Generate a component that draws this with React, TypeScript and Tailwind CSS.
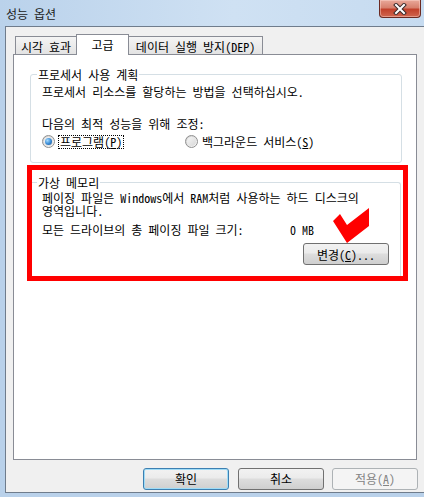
import React from "react";

const btnFace =
  "bg-[linear-gradient(#f2f2f2,#ebebeb_45%,#dddddd_50%,#cfcfcf)]";

function CloseButton() {
  return (
    <div className="ml-auto mr-[3px] w-[42px] h-[18px] rounded-b-[4px] border border-t-0 border-[#6b2a22] bg-[linear-gradient(#e9a99a,#d7806d_45%,#c2412b_55%,#d0664f)] shadow-[inset_0_0_0_1px_rgba(255,220,210,0.45)] flex items-center justify-center">
      <svg width="14" height="12" viewBox="0 0 14 12">
        <path d="M3 2 L11 10 M11 2 L3 10" stroke="#3b2a2a" strokeWidth="4" strokeLinecap="square" />
        <path d="M3 2 L11 10 M11 2 L3 10" stroke="#ffffff" strokeWidth="2" strokeLinecap="square" />
      </svg>
    </div>
  );
}

function Radio({ checked }: { checked?: boolean }) {
  return (
    <span className="flex w-[13px] h-[13px] shrink-0 items-center justify-center rounded-full border border-[#8f8f8f] bg-linear-to-br from-[#cfcfcf] to-[#fbfbfb]">
      <span className="flex w-[9px] h-[9px] items-center justify-center rounded-full bg-linear-to-br from-[#f6f6f6] to-[#d8d8d8]">
        {checked && (
          <span className="w-[7px] h-[7px] rounded-full bg-radial-[at_35%_35%] from-[#a8dcff] via-[#3e8fd8] to-[#174f8f]" />
        )}
      </span>
    </span>
  );
}

function Tab({ label, selected, width }: { label: string; selected?: boolean; width: string }) {
  if (selected) {
    return (
      <div className={`${width} h-[21px] -ml-px -mb-px relative z-10 border border-b-0 border-[#898c95] bg-white flex justify-center pt-[2px] leading-[15px]`}>
        {label}
      </div>
    );
  }
  return (
    <div className={`${width} h-[18px] -ml-px first:ml-0 border border-b-0 border-[#898c95] bg-linear-to-b from-[#f4f4f4] to-[#e3e3e3] flex justify-center pt-[2px] leading-[15px]`}>
      {label}
    </div>
  );
}

export default function App() {
  return (
    <div className="w-[424px] h-[497px] flex flex-col overflow-hidden bg-[#b9d1ea] text-[12px] text-black font-['Noto_Sans_Mono_CJK_KR','Noto_Sans_CJK_KR',monospace]">
      {/* title bar */}
      <div className="h-[26px] shrink-0 flex items-start bg-[linear-gradient(to_right,#bad2eb,#cfe1f3_55%,#c6dbf0)]">
        <span className="pl-[6px] pt-[6px] leading-[15px] text-[#1b1b1b]">성능 옵션</span>
        <CloseButton />
      </div>

      {/* dialog body */}
      <div className="ml-[5px] h-[467px] shrink-0 flex flex-col border-t border-l border-b border-[#6f7c8c] bg-[#f0f0f0] pt-[7px] pl-[7px]">
        <div className="h-[20px] flex items-end pl-[2px]">
          <Tab label="시각 효과" width="w-[62px]" />
          <Tab label="고급" width="w-[53px]" selected />
          <Tab label="데이터 실행 방지(DEP)" width="w-[135px]" />
        </div>

        <div className="w-[404px] h-[406px] border border-[#898c95] bg-white flex flex-col">
          {/* processor scheduling */}
          <fieldset className="mt-[12px] ml-[16px] w-[372px] border border-[#d5dfe5] rounded-[3px] pb-[13px]">
            <legend className="ml-[6px] px-[1px] leading-[15px]">프로세서 사용 계획</legend>
            <div className="pl-[11px] flex flex-col">
              <p className="mt-[2px] leading-[15px]">프로세서 리소스를 할당하는 방법을 선택하십시오.</p>
              <p className="mt-[17px] leading-[15px]">다음의 최적 성능을 위해 조정:</p>
              <div className="mt-[3px] h-[15px] flex items-center">
                <div className="w-[143px] flex items-center gap-[3px]">
                  <Radio checked />
                  <span className="border border-dotted border-black px-[1px] leading-[12px]">
                    프로그램(<span className="underline underline-offset-[1px]">P</span>)
                  </span>
                </div>
                <div className="flex items-center gap-[3px]">
                  <Radio />
                  <span className="px-[1px] leading-[12px]">
                    백그라운드 서비스(<span className="underline underline-offset-[1px]">S</span>)
                  </span>
                </div>
              </div>
            </div>
          </fieldset>

          {/* virtual memory, highlighted */}
          <div className="mt-[2px] ml-[13px] w-[381px] h-[116px] border-[5px] border-[#ff0000] flex flex-col">
            <fieldset className="mt-[5px] mr-[2px] border-t border-r border-[#d5dfe5] rounded-tr-[3px] flex-1">
              <legend className="ml-[5px] px-[1px] leading-[15px]">가상 메모리</legend>
              <div className="pl-[10px] flex flex-col">
                <p className="mt-[1px] leading-[13px] whitespace-nowrap">
                  페이징 파일은 Windows에서 RAM처럼 사용하는 하드 디스크의
                  <br />
                  영역입니다.
                </p>
                <div className="mt-[6px] flex leading-[13px]">
                  <span className="w-[248px]">모든 드라이브의 총 페이징 파일 크기:</span>
                  <span>0 MB</span>
                </div>
                <button className={`mt-[7px] mr-[11px] self-end w-[86px] h-[22px] rounded-[3px] border border-[#707070] ${btnFace} leading-[15px]`}>
                  변경(<span className="underline underline-offset-[1px]">C</span>)...
                </button>
              </div>
            </fieldset>
          </div>
        </div>

        {/* dialog buttons */}
        <div className="mt-[8px] flex justify-end pr-[6px]">
          <button className={`w-[86px] h-[22px] mr-[9px] rounded-[3px] border border-[#3c7fb1] shadow-[inset_0_0_0_1px_#9fdcf7] ${btnFace}`}>
            확인
          </button>
          <button className={`w-[86px] h-[22px] mr-[8px] rounded-[3px] border border-[#707070] ${btnFace}`}>
            취소
          </button>
          <button className="w-[86px] h-[22px] rounded-[3px] border border-[#adb2b5] bg-[#f4f4f4] text-[#838383]">
            적용(<span className="underline underline-offset-[1px]">A</span>)
          </button>
        </div>
      </div>

      {/* checkmark annotation */}
      <svg className="absolute left-[333px] top-[208px]" width="37" height="36" viewBox="0 0 37 36">
        <polygon points="0,13 7,6 14,17 36,0 36,18 14,35" fill="#ff0000" />
      </svg>
    </div>
  );
}
